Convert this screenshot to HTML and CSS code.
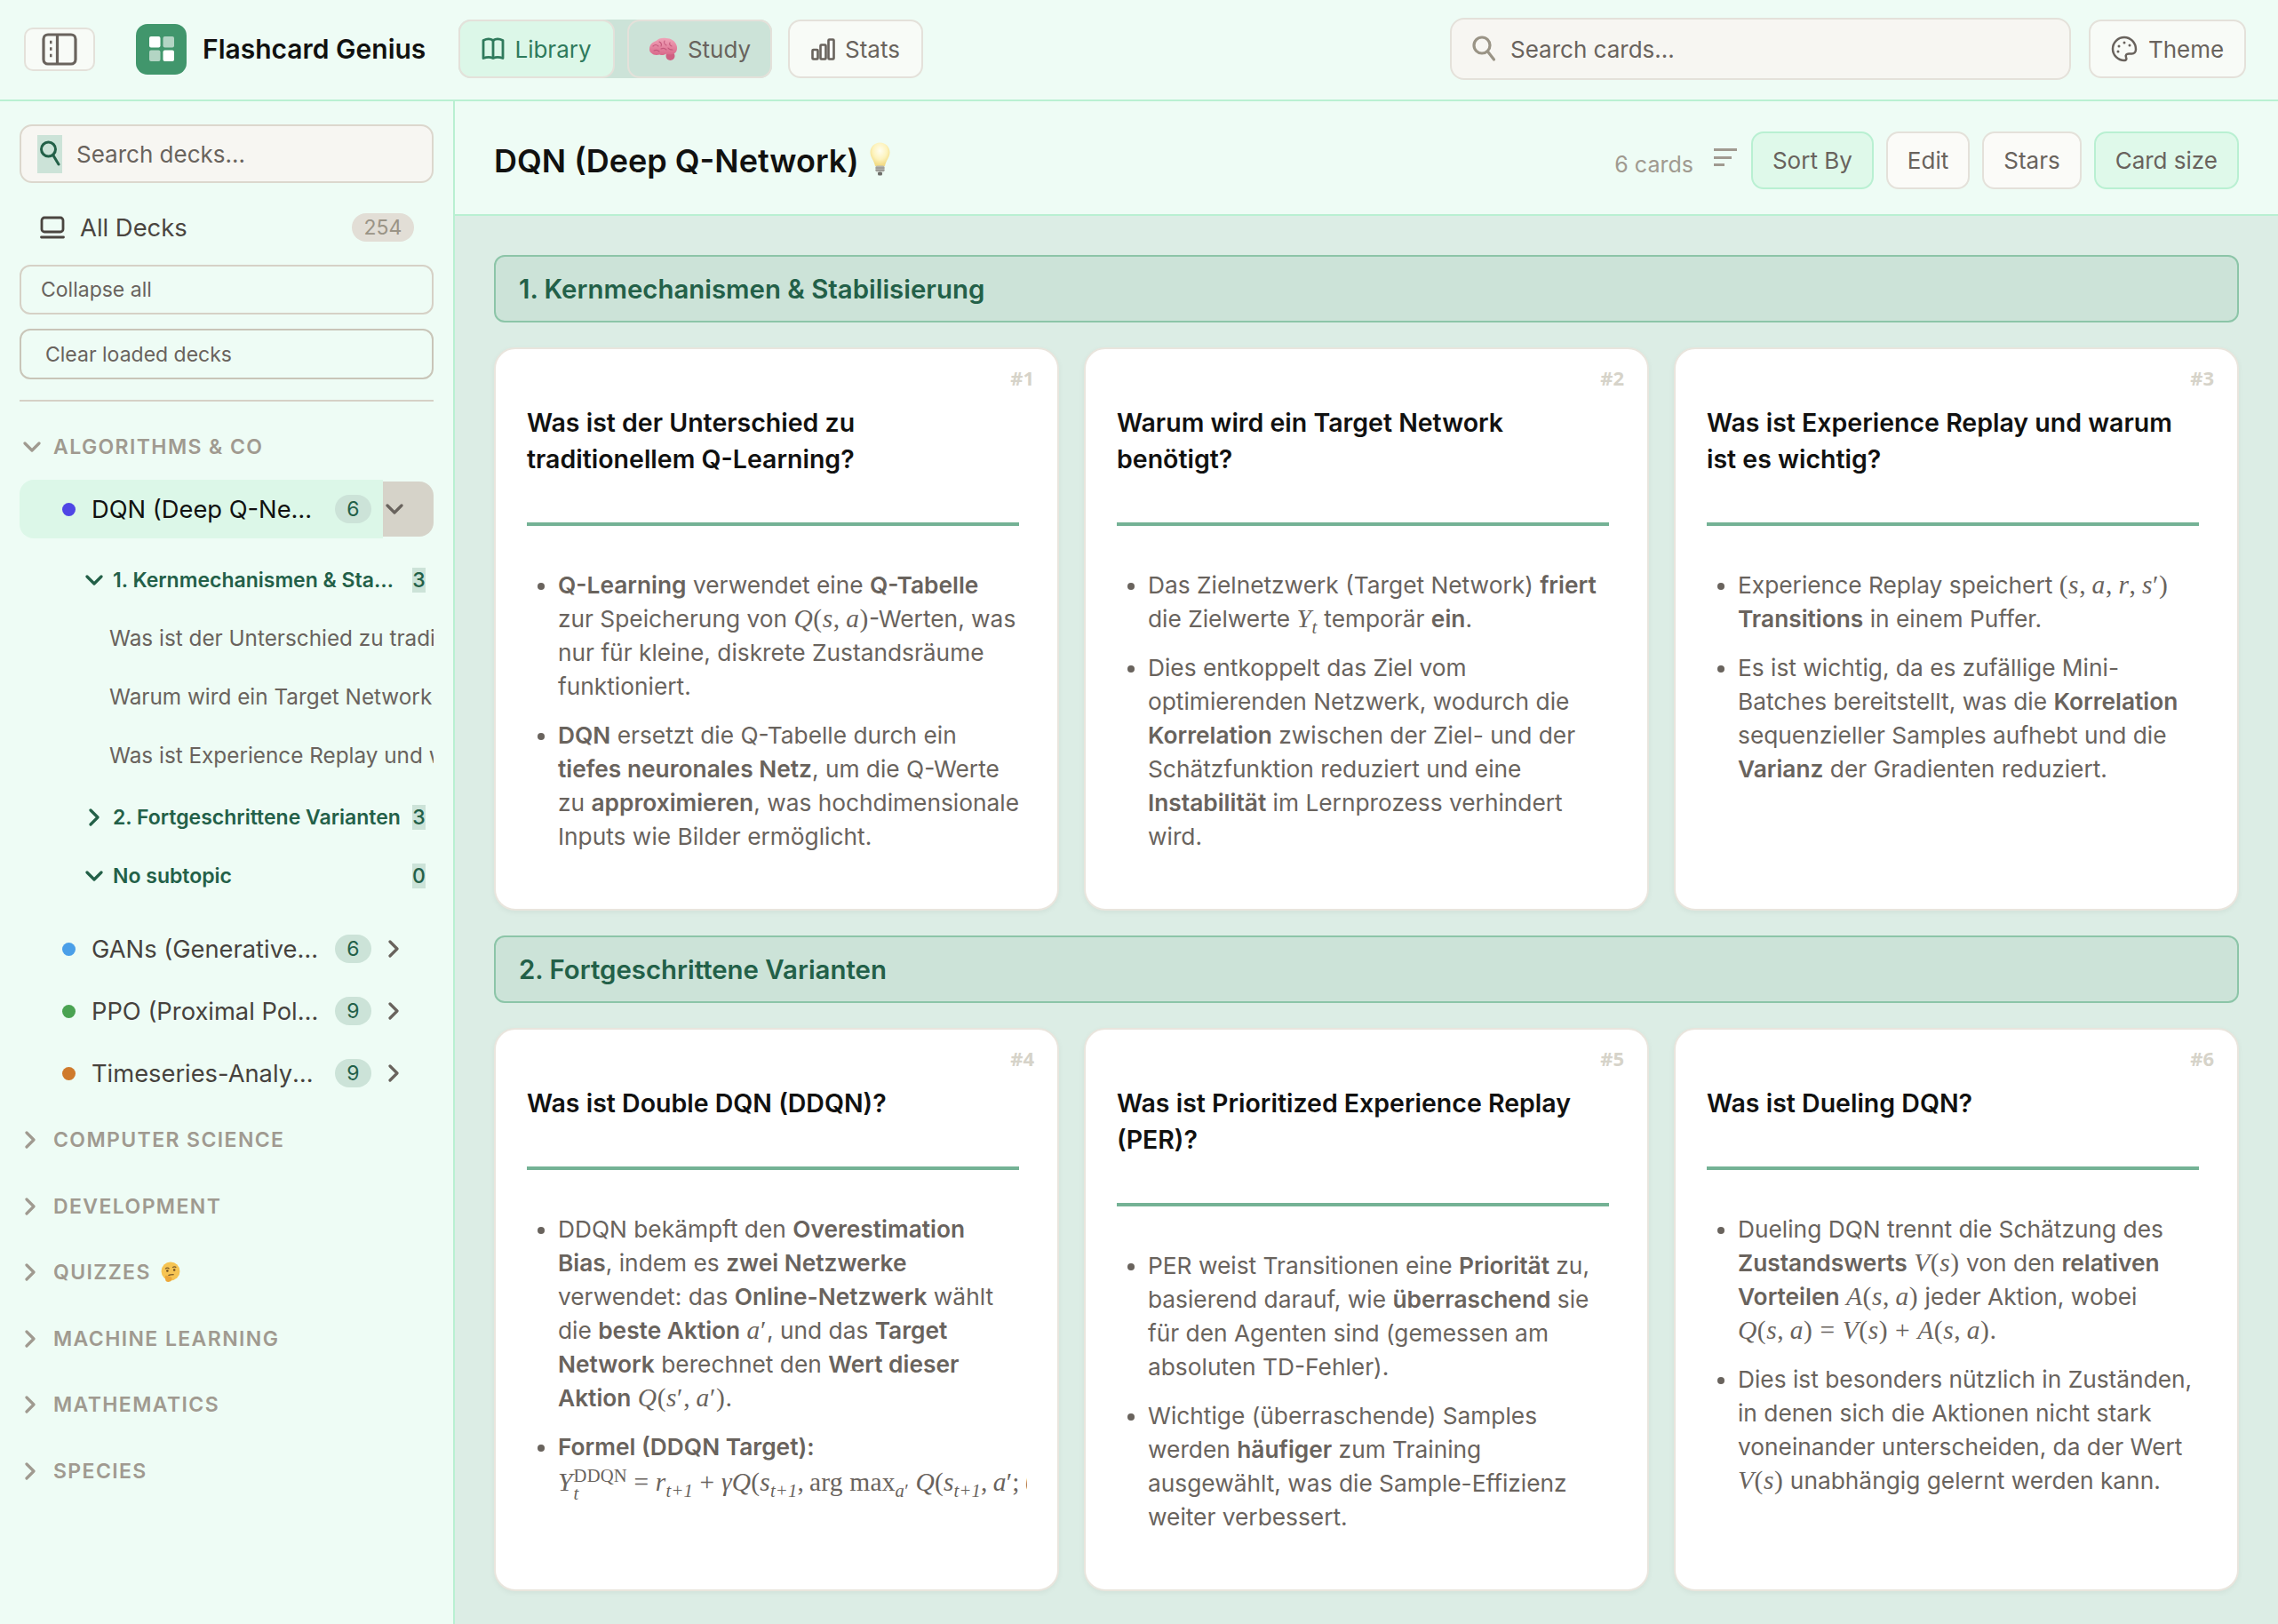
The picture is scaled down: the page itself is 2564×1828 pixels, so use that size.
FILE: index.html
```html
<!DOCTYPE html>
<html lang="de">
<head>
<meta charset="utf-8">
<title>Flashcard Genius</title>
<link rel="stylesheet" href="styles.css">
</head>
<body>
<div class="app">
<header class="topbar">
  <button class="tbtn burger" aria-label="Toggle sidebar">
    <svg width="40" height="37" viewBox="0 0 40 37" fill="none" stroke="#69635d" stroke-width="3.2"><rect x="2" y="2" width="36" height="33" rx="5"/><path d="M17.5 2v33"/><path d="M9 10.5h2.5M9 18h2.5M9 25.5h2.5" stroke-width="3.6"/></svg>
  </button>
  <div class="logo">
    <svg width="28" height="28" viewBox="0 0 28 28"><rect x="0" y="0" width="12.500" height="12.500" rx="2" fill="#fff"/><rect x="15.500" y="0" width="12.500" height="12.500" rx="2" fill="#fff" opacity=".6"/><rect x="0" y="15.500" width="12.500" height="12.500" rx="2" fill="#fff" opacity=".6"/><rect x="15.500" y="15.500" width="12.500" height="12.500" rx="2" fill="#fff"/></svg>
  </div>
  <div class="brand">Flashcard Genius</div>
  <nav class="navgroup">
    <button class="tbtn nav active">
      <svg width="26" height="27" viewBox="0 0 26 27" fill="none" stroke="#2f7a5c" stroke-width="2.8" stroke-linejoin="round"><path d="M2 3.500c4-2 8-2 11 0c3-2 7-2 11 0v20c-4-1.500-8-1.500-11 0c-3-1.500-7-1.500-11 0z"/><path d="M13 3.500v20"/></svg>
      Library
    </button>
    <button class="tbtn nav study">
      <svg width="33" height="26" viewBox="0 0 33 26"><defs><linearGradient id="br" x1="0" y1="0" x2="0" y2="1"><stop offset="0" stop-color="#f0a3b8"/><stop offset="1" stop-color="#d9688a"/></linearGradient></defs><circle cx="24.500" cy="21" r="5" fill="#cf5f82"/><path fill="url(#br)" d="M1 13.500C1 8 5 5 8.500 4C11 1 16 0 20 1c5 0 10 3 11.500 8c1.500 4 0 8-3 9.500c-3 1.500-6 1-8.500 0c-2 1.500-5 2-7.500 1C9 20.500 5 20 3.500 18C1.500 17 1 15 1 13.500z"/><path fill="none" stroke="#c4597c" stroke-width="1.100" stroke-linecap="round" d="M5 10c2-2 4-2 6 0M12 5c2 1 3 3 2 5M18 4c-1 2 0 4 2 5M24 6c-1 2 0 3 2 4M6 15c2-1 4-1 6 1M14 13c2-1 4-1 6 1M22 12c1 2 3 2 5 2"/></svg>
      Study
    </button>
  </nav>
  <button class="tbtn nav stats">
    <svg width="27" height="25" viewBox="0 0 27 25" fill="none" stroke="#69635d" stroke-width="2.600" stroke-linejoin="round"><rect x="1.500" y="13" width="6" height="10.500" rx="1"/><rect x="10.500" y="7.500" width="6" height="16" rx="1"/><rect x="19.500" y="1.500" width="6" height="22" rx="1"/></svg>
    Stats
  </button>
  <div class="spacer"></div>
  <label class="cardsearch">
    <svg width="30" height="30" viewBox="0 0 30 30" fill="none" stroke="#9a9486" stroke-width="3.200" stroke-linecap="round"><circle cx="12" cy="11" r="9"/><path d="M18.500 18l7 9"/></svg>
    <span>Search cards...</span>
  </label>
  <button class="tbtn theme">
    <svg width="30" height="30" viewBox="0 0 30 30" fill="none" stroke="#69635d" stroke-width="2.500"><path d="M15 2a13 13 0 1 0 0 26c2 0 3-1.500 2-3.500c-1-2.500 .5-4 3-4h3.500c2.500 0 4.500-2 4.500-5C28 8 22 2 15 2z"/><circle cx="9" cy="12" r="1.500" fill="#69635d" stroke="none"/><circle cx="15" cy="8" r="1.500" fill="#69635d" stroke="none"/><circle cx="21" cy="11" r="1.500" fill="#69635d" stroke="none"/><circle cx="8" cy="18" r="1.500" fill="#69635d" stroke="none"/></svg>
    Theme
  </button>
</header>

<div class="body">
<aside class="sidebar">
  <label class="decksearch">
    <span class="dsicon"><svg width="24" height="30" viewBox="0 0 24 30" fill="none" stroke="#236048" stroke-width="3" stroke-linecap="round"><circle cx="10.500" cy="10" r="8"/><path d="M16 17l6 10"/></svg></span>
    <span>Search decks...</span>
  </label>
  <div class="alldecks">
    <svg width="28" height="26" viewBox="0 0 28 26" fill="none" stroke="#4a4540" stroke-width="2.800" stroke-linejoin="round"><rect x="2" y="2" width="24" height="16" rx="3"/><path d="M1.500 24h25" stroke-linecap="round"/></svg>
    <span class="adlabel">All Decks</span>
    <span class="adcount">254</span>
  </div>
  <button class="sidebtn">Collapse all</button>
  <button class="sidebtn clear">Clear loaded decks</button>
  <div class="rule"></div>

  <div class="cat first">
    <svg class="chev" width="20" height="12" viewBox="0 0 20 12" fill="none" stroke="#a09a90" stroke-width="3.200" stroke-linecap="round" stroke-linejoin="round"><path d="M2 2l8 8l8-8"/></svg>
    <span>ALGORITHMS &amp; CO</span>
  </div>

  <div class="deck active">
    <div class="deckmain">
      <i class="dot d1"></i>
      <span class="deckname">DQN (Deep Q-Network) 💡</span>
      <span class="deckcount">6</span>
    </div>
    <div class="deckext">
      <svg width="20" height="12" viewBox="0 0 20 12" fill="none" stroke="#69635d" stroke-width="3.200" stroke-linecap="round" stroke-linejoin="round"><path d="M2 2l8 8l8-8"/></svg>
    </div>
  </div>

  <div class="sub s1">
    <svg width="20" height="12" viewBox="0 0 20 12" fill="none" stroke="#236048" stroke-width="3.200" stroke-linecap="round" stroke-linejoin="round"><path d="M2 2l8 8l8-8"/></svg>
    <span class="subname">1. Kernmechanismen &amp; Stabilisierung</span>
    <span class="subcount">3</span>
  </div>
  <div class="item">Was ist der Unterschied zu traditionellem Q-Learning?</div>
  <div class="item">Warum wird ein Target Network benötigt?</div>
  <div class="item">Was ist Experience Replay und warum ist es wichtig?</div>
  <div class="sub s2">
    <svg width="20" height="20" viewBox="0 0 20 20" fill="none" stroke="#236048" stroke-width="3.200" stroke-linecap="round" stroke-linejoin="round"><path d="M6 2l8 8l-8 8"/></svg>
    <span class="subname">2. Fortgeschrittene Varianten</span>
    <span class="subcount">3</span>
  </div>
  <div class="sub">
    <svg width="20" height="12" viewBox="0 0 20 12" fill="none" stroke="#236048" stroke-width="3.200" stroke-linecap="round" stroke-linejoin="round"><path d="M2 2l8 8l8-8"/></svg>
    <span class="subname">No subtopic</span>
    <span class="subcount">0</span>
  </div>

  <div class="deck plain gap">
    <div class="deckmain"><i class="dot d2"></i><span class="deckname">GANs (Generative Adversarial Networks)</span><span class="deckcount">6</span></div>
    <div class="deckext"><svg width="14" height="20" viewBox="0 0 14 20" fill="none" stroke="#69635d" stroke-width="3.200" stroke-linecap="round" stroke-linejoin="round"><path d="M3 2l8 8l-8 8"/></svg></div>
  </div>
  <div class="deck plain">
    <div class="deckmain"><i class="dot d3"></i><span class="deckname">PPO (Proximal Policy Optimization)</span><span class="deckcount">9</span></div>
    <div class="deckext"><svg width="14" height="20" viewBox="0 0 14 20" fill="none" stroke="#69635d" stroke-width="3.200" stroke-linecap="round" stroke-linejoin="round"><path d="M3 2l8 8l-8 8"/></svg></div>
  </div>
  <div class="deck plain">
    <div class="deckmain"><i class="dot d4"></i><span class="deckname">Timeseries-Analyse und Prognose</span><span class="deckcount">9</span></div>
    <div class="deckext"><svg width="14" height="20" viewBox="0 0 14 20" fill="none" stroke="#69635d" stroke-width="3.200" stroke-linecap="round" stroke-linejoin="round"><path d="M3 2l8 8l-8 8"/></svg></div>
  </div>

  <div class="cat closed firstclosed"><svg class="chev" width="14" height="20" viewBox="0 0 14 20" fill="none" stroke="#a09a90" stroke-width="3.200" stroke-linecap="round" stroke-linejoin="round"><path d="M3 2l8 8l-8 8"/></svg><span>COMPUTER SCIENCE</span></div>
  <div class="cat closed"><svg class="chev" width="14" height="20" viewBox="0 0 14 20" fill="none" stroke="#a09a90" stroke-width="3.200" stroke-linecap="round" stroke-linejoin="round"><path d="M3 2l8 8l-8 8"/></svg><span>DEVELOPMENT</span></div>
  <div class="cat closed"><svg class="chev" width="14" height="20" viewBox="0 0 14 20" fill="none" stroke="#a09a90" stroke-width="3.200" stroke-linecap="round" stroke-linejoin="round"><path d="M3 2l8 8l-8 8"/></svg><span>QUIZZES</span>
    <svg class="think" width="24" height="24" viewBox="0 0 23 23"><circle cx="11.500" cy="10.500" r="10" fill="#f6c453"/><path d="M6 8c1-1.500 3-1.500 4 0M13.500 6.500c1.500-1 3-1 4 0" stroke="#7a5a2a" stroke-width="1.200" fill="none"/><circle cx="8" cy="10" r="1.200" fill="#6b4a20"/><circle cx="15.500" cy="9" r="1.200" fill="#6b4a20"/><path d="M9 15c2-1 4-1 6-1" stroke="#7a5a2a" stroke-width="1.200" fill="none"/><path d="M6 15c2 0 7 1 7 3s-1 4-4 4c-2 0-3-1-3-2s-1-3 0-5z" fill="#eda83a"/></svg></div>
  <div class="cat closed"><svg class="chev" width="14" height="20" viewBox="0 0 14 20" fill="none" stroke="#a09a90" stroke-width="3.200" stroke-linecap="round" stroke-linejoin="round"><path d="M3 2l8 8l-8 8"/></svg><span>MACHINE LEARNING</span></div>
  <div class="cat closed"><svg class="chev" width="14" height="20" viewBox="0 0 14 20" fill="none" stroke="#a09a90" stroke-width="3.200" stroke-linecap="round" stroke-linejoin="round"><path d="M3 2l8 8l-8 8"/></svg><span>MATHEMATICS</span></div>
  <div class="cat closed"><svg class="chev" width="14" height="20" viewBox="0 0 14 20" fill="none" stroke="#a09a90" stroke-width="3.200" stroke-linecap="round" stroke-linejoin="round"><path d="M3 2l8 8l-8 8"/></svg><span>SPECIES</span></div>
</aside>

<main class="main">
  <div class="mainhead">
    <h1>DQN (Deep Q-Network)</h1>
    <svg class="bulb" width="23" height="38" viewBox="0 0 23 38"><defs><radialGradient id="bl" cx=".5" cy=".35" r=".6"><stop offset="0" stop-color="#fffef0"/><stop offset=".6" stop-color="#fdf3bd"/><stop offset="1" stop-color="#f3dc86"/></radialGradient></defs><path d="M11.500 .500C5 .500 .500 5.500 .500 11.500c0 6 4.500 9 5.500 15.500h11c1-6.500 5.500-9.500 5.500-15.500C22.500 5.500 18 .500 11.500 .500z" fill="url(#bl)"/><rect x="6.500" y="26.500" width="10" height="7" rx="1.500" fill="#b5b5b0"/><path d="M6.500 29h10M6.500 31.500h10" stroke="#8a8a85" stroke-width="1"/><rect x="9" y="33.500" width="5" height="4" rx="1.500" fill="#6e6e6a"/></svg>
    <div class="spacer"></div>
    <span class="ncards">6 cards</span>
    <svg class="sorticon" width="27" height="22" viewBox="0 0 27 22" fill="#a09a90"><rect x="0" y="1" width="26" height="3"/><rect x="0" y="10" width="20" height="3"/><rect x="0" y="18" width="12" height="3"/></svg>
    <button class="hbtn on">Sort By</button>
    <button class="hbtn">Edit</button>
    <button class="hbtn">Stars</button>
    <button class="hbtn on">Card size</button>
  </div>

  <div class="content">
    <h2 class="sec">1. Kernmechanismen &amp; Stabilisierung</h2>
    <div class="grid">
      <article class="card">
        <span class="num">#1</span>
        <h3>Was ist der Unterschied zu traditionellem Q-Learning?</h3>
        <ul>
          <li><b>Q-Learning</b> verwendet eine <b>Q-Tabelle</b> zur Speicherung von <span class="m"><i>Q</i>(<i>s</i>,&thinsp;<i>a</i>)</span>-Werten, was nur für kleine, diskrete Zustandsräume funktioniert.</li>
          <li><b>DQN</b> ersetzt die Q-Tabelle durch ein <b>tiefes neuronales Netz</b>, um die Q-Werte zu <b>approximieren</b>, was hochdimensionale Inputs wie Bilder ermöglicht.</li>
        </ul>
      </article>
      <article class="card">
        <span class="num">#2</span>
        <h3>Warum wird ein Target Network benötigt?</h3>
        <ul>
          <li>Das Zielnetzwerk (Target Network) <b>friert</b> die Zielwerte <span class="m"><i>Y<sub>t</sub></i></span> temporär <b>ein</b>.</li>
          <li>Dies entkoppelt das Ziel vom optimierenden Netzwerk, wodurch die <b>Korrelation</b> zwischen der Ziel- und der Schätzfunktion reduziert und eine <b>Instabilität</b> im Lernprozess verhindert wird.</li>
        </ul>
      </article>
      <article class="card">
        <span class="num">#3</span>
        <h3>Was ist Experience Replay und warum ist es wichtig?</h3>
        <ul>
          <li>Experience Replay speichert <span class="m">(<i>s</i>,&thinsp;<i>a</i>,&thinsp;<i>r</i>,&thinsp;<i>s</i>′)</span> <b>Transitions</b> in einem Puffer.</li>
          <li>Es ist wichtig, da es zufällige Mini-Batches bereitstellt, was die <b>Korrelation</b> sequenzieller Samples aufhebt und die <b>Varianz</b> der Gradienten reduziert.</li>
        </ul>
      </article>
    </div>

    <h2 class="sec second">2. Fortgeschrittene Varianten</h2>
    <div class="grid">
      <article class="card">
        <span class="num">#4</span>
        <h3>Was ist Double DQN (DDQN)?</h3>
        <ul>
          <li>DDQN bekämpft den <b>Overestimation Bias</b>, indem es <b>zwei Netzwerke</b> verwendet: das <b>Online-Netzwerk</b> wählt die <b>beste Aktion</b> <span class="m"><i>a</i>′</span>, und das <b>Target Network</b> berechnet den <b>Wert dieser Aktion</b> <span class="m"><i>Q</i>(<i>s</i>′,&thinsp;<i>a</i>′)</span>.</li>
          <li><b>Formel (DDQN Target):</b>
            <div class="formula m"><i>Y</i><span class="ss"><span>DDQN</span><i>t</i></span> = <i>r<sub>t+1</sub></i> + <i>γQ</i>(<i>s<sub>t+1</sub></i>,&thinsp;arg max<sub><i>a</i>′</sub> <i>Q</i>(<i>s<sub>t+1</sub></i>,&thinsp;<i>a</i>′;&thinsp;<i>θ</i><sup>−</sup>))</div>
          </li>
        </ul>
      </article>
      <article class="card">
        <span class="num">#5</span>
        <h3>Was ist Prioritized Experience Replay (PER)?</h3>
        <ul>
          <li>PER weist Transitionen eine <b>Priorität</b> zu, basierend darauf, wie <b>überraschend</b> sie für den Agenten sind (gemessen am absoluten TD-Fehler).</li>
          <li>Wichtige (überraschende) Samples werden <b>häufiger</b> zum Training ausgewählt, was die Sample-Effizienz weiter verbessert.</li>
        </ul>
      </article>
      <article class="card">
        <span class="num">#6</span>
        <h3>Was ist Dueling DQN?</h3>
        <ul>
          <li>Dueling DQN trennt die Schätzung des <b>Zustandswerts</b> <span class="m"><i>V</i>(<i>s</i>)</span> von den <b>relativen Vorteilen</b> <span class="m"><i>A</i>(<i>s</i>,&thinsp;<i>a</i>)</span> jeder Aktion, wobei <span class="m"><i>Q</i>(<i>s</i>,&thinsp;<i>a</i>) = <i>V</i>(<i>s</i>) + <i>A</i>(<i>s</i>,&thinsp;<i>a</i>)</span>.</li>
          <li>Dies ist besonders nützlich in Zuständen, in denen sich die Aktionen nicht stark voneinander unterscheiden, da der Wert <span class="m"><i>V</i>(<i>s</i>)</span> unabhängig gelernt werden kann.</li>
        </ul>
      </article>
    </div>
  </div>
</main>
</div>
</div>
</body>
</html>
```

FILE: styles.css
```css
* { box-sizing: border-box; }
html, body { margin: 0; padding: 0; height: 100%; overflow: hidden; }
body { font-family: Inter, "Liberation Sans", sans-serif; color: #69635d; background: #eefcf5; }
button { font-family: inherit; cursor: pointer; }
.app { display: flex; flex-direction: column; height: 100vh; }
.spacer { flex: 1; }

.topbar { display: flex; align-items: center; height: 114px; flex: none; padding: 0 36px 2px 27px; background: #eefcf5; border-bottom: 2px solid #b9f0d2; }
.tbtn { display: inline-flex; align-items: center; justify-content: center; background: #f8fbf7; border: 2px solid #e4e1da; border-radius: 14px; color: #69635d; font-size: 26px; padding: 0; }
.burger { width: 80px; height: 49px; margin-right: 46px; border-radius: 10px; }
.logo { width: 57px; height: 57px; border-radius: 13px; background: #41966c; display: flex; align-items: center; justify-content: center; margin-right: 18px; }
.brand { font-size: 30px; font-weight: 600; color: #111110; width: 288px; white-space: nowrap; }
.navgroup { display: flex; gap: 14px; background: #cce3d8; border-radius: 14px; margin-right: 18px; }
.nav { height: 66px; gap: 11px; }
.active.nav { width: 176px; background: #dcf7e8; color: #2f7a5c; }
.study { width: 163px; background: #cce3d8; }
.stats { width: 152px; }
.cardsearch { display: flex; align-items: center; gap: 14px; width: 699px; height: 70px; padding-left: 22px; background: #f7f6f2; border: 2px solid #e4e1da; border-radius: 16px; font-size: 26px; margin-right: 20px; color: #69635d; }
.theme { width: 177px; height: 66px; gap: 12px; }

.body { display: flex; flex: 1; min-height: 0; }
.sidebar { width: 512px; flex: none; padding: 26px 22px 0; border-right: 2px solid #b9f0d2; background: #eefcf5; overflow: hidden; }
.decksearch { display: flex; align-items: center; height: 66px; padding-left: 18px; background: #f7f6f2; border: 2px solid #dcd7cd; border-radius: 14px; font-size: 26px; color: #69635d; gap: 16px; }
.dsicon { display: flex; align-items: center; justify-content: center; width: 28px; height: 43px; background: #cce3d8; }
.alldecks { display: flex; align-items: center; height: 52px; margin: 24px 0 16px; padding-left: 23px; gap: 17px; }
.adlabel { font-size: 27.400px; color: #4a4540; flex: 1; }
.adcount { width: 70px; height: 32px; border-radius: 16px; background: #e2ded6; color: #9a9486; font-size: 23px; display: flex; align-items: center; justify-content: center; margin-right: 22px; }
.sidebtn { display: block; width: 100%; height: 56px; background: transparent; border: 2px solid #d6d1c6; border-radius: 12px; font-size: 23px; color: #69635d; text-align: left; padding: 0 0 0 22px; margin-bottom: 16px; }
.clear { padding-left: 27px; height: 57px; margin-bottom: 23px; border-color: #c9c5b8; }
.rule { height: 2px; background: #d6d1c6; }

.cat { display: flex; align-items: center; height: 74.500px; font-size: 23px; font-weight: 600; letter-spacing: 1.400px; color: #a09a90; padding-left: 38px; }
.cat .chev { flex: none; margin-left: -34px; margin-right: 14px; }
.cat.first { margin-top: 14px; height: 74px; }
.cat.closed .chev { margin-left: -33px; margin-right: 19px; }
.firstclosed { margin-top: 3px; }
.think { margin-left: 10px; }

.deck { display: flex; align-items: stretch; height: 66px; }
.deckmain { display: flex; align-items: center; width: 409px; padding: 0 13px 0 48px; border-radius: 16px 0 0 16px; }
.deck.active .deckmain { background: #dcf7e8; }
.deck.active .deckname { padding-right: 4px; }
.deckext { width: 57px; display: flex; align-items: center; padding-left: 3px; }
.deck.active .deckext { background: #d6d3c9; margin: 2px 0; border-radius: 0 16px 16px 0; }
.plain { height: 70px; }
.plain .deckext { padding-left: 5px; }
.gap { margin-top: 14px; }
.dot { width: 15px; height: 15px; border-radius: 50%; flex: none; margin-right: 18px; }
.d1 { background: #4f46e5; }
.d2 { background: #4a9fe8; }
.d3 { background: #4aa352; }
.d4 { background: #cf7a2c; }
.deckname { flex: 1; min-width: 0; white-space: nowrap; overflow: hidden; text-overflow: ellipsis; font-size: 27.300px; color: #46423d; }
.active .deckname { color: #111110; }
.deckcount { flex: none; width: 41px; height: 32px; margin-left: 17px; border-radius: 16px; background: #cce3d8; color: #236048; font-size: 23px; display: flex; align-items: center; justify-content: center; }

.sub { display: flex; align-items: center; height: 66px; padding-left: 74px; font-size: 23px; font-weight: 600; color: #236048; }
.sub svg { flex: none; margin-right: 11px; }
.s1 { margin-top: 14px; height: 65px; }
.s2 { margin-top: 4px; }
.subname { flex: 1; min-width: 0; white-space: nowrap; overflow: hidden; text-overflow: ellipsis; }
.subcount { flex: none; width: 15px; height: 28px; margin: 0 9px 0 8px; background: #cce3d8; font-size: 23px; font-weight: 500; display: flex; align-items: center; justify-content: center; }
.item { height: 66px; line-height: 66px; padding-left: 101px; font-size: 24.300px; color: #69635d; white-space: nowrap; overflow: hidden; }

.main { flex: 1; min-width: 0; display: flex; flex-direction: column; }
.mainhead { display: flex; align-items: center; height: 129px; flex: none; padding: 6px 44px 0; background: #eefcf5; border-bottom: 2px solid #b9f0d2; }
h1 { margin: 0 12px 0 0; font-size: 36px; font-weight: 600; color: #111110; white-space: nowrap; }
.bulb { margin-top: -4px; }
.ncards { font-size: 25px; color: #a09a90; margin: 8px 23px 0 0; }
.sorticon { margin: -8px 15px 0 0; }
.hbtn { height: 65px; padding: 0 22px; border: 2px solid #e4e1da; border-radius: 14px; background: #fbfbf8; color: #69635d; font-size: 26px; margin-right: 14px; }
.hbtn:last-child { margin-right: 0; }
.hbtn.on { background: #dff9ea; border-color: #b9f0d2; }

.content { flex: 1; min-height: 0; overflow: hidden; background: #dcede5; padding: 44px 44px 0; }
.sec { display: flex; align-items: center; height: 76px; margin: 0 0 28px; padding-left: 26px; background: #cce3d8; border: 2px solid #8cc5a8; border-radius: 12px; font-size: 29.400px; font-weight: 600; color: #236048; }
.second { margin-top: 28px; }
.grid { display: grid; grid-template-columns: repeat(3, 1fr); gap: 28px; }
.card { position: relative; height: 634px; padding: 62px 43px 0 35px; background: #fff; border: 2px solid #e9e5dd; border-radius: 24px; box-shadow: 0 2px 6px rgba(0, 0, 0, .05); overflow: hidden; }
.num { position: absolute; top: 17px; right: 26px; font-family: "Open Sans", sans-serif; font-size: 22px; font-weight: 700; color: #d6d3c9; }
h3 { margin: 0; padding-bottom: 50.500px; border-bottom: 4px solid #74b295; font-size: 28.500px; line-height: 41px; font-weight: 600; color: #111110; }
ul { margin: 48.500px 0 0; padding: 0 0 0 35px; font-size: 26.300px; line-height: 38px; color: #69635d; }
li { margin-bottom: 17px; }
li b { font-weight: 600; }
.m { font-family: "Liberation Serif", serif; font-size: 1.120em; letter-spacing: .6px; line-height: 1; white-space: nowrap; }
.m sub, .m sup { font-size: .7em; line-height: 0; }
.formula { display: block; width: 528px; height: 40px; line-height: 40px; overflow: hidden; margin-top: 0; letter-spacing: .2px; }
.ss { display: inline-flex; flex-direction: column; vertical-align: middle; font-size: .7em; line-height: 18px; margin-left: 1px; }
.ss i { margin-top: 2px; }
```
